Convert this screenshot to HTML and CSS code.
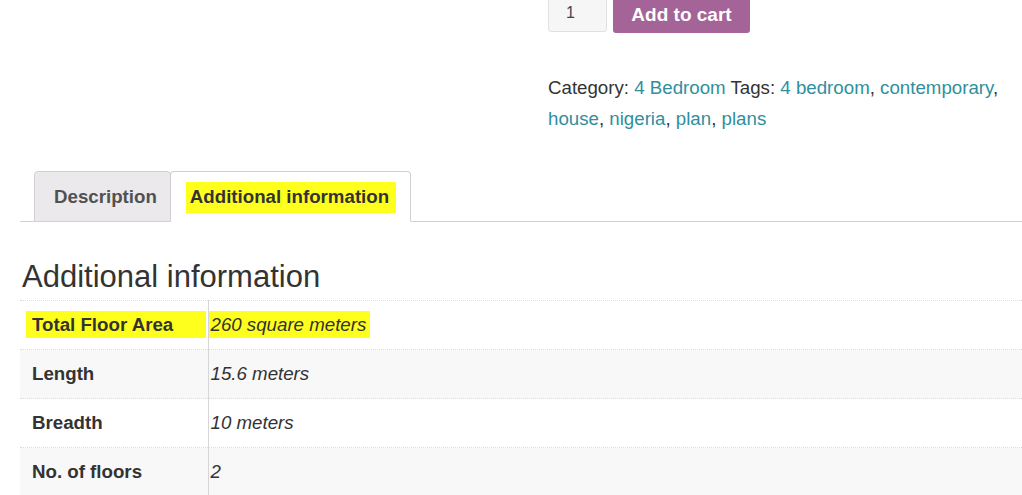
FILE: index.html
```html
<!DOCTYPE html>
<html>
<head>
<meta charset="utf-8">
<link rel="stylesheet" href="styles.css">
</head>
<body>
<div class="page">
  <div class="top">
    <div class="gallery"></div>
    <div class="summary">
      <form class="cart">
        <div class="qty">1</div>
        <button type="button" class="btn">Add to cart</button>
      </form>
      <div class="meta">
        Category: <a href="#">4 Bedroom</a> Tags: <a href="#">4 bedroom</a>, <a href="#">contemporary</a>, <a href="#">house</a>, <a href="#">nigeria</a>, <a href="#">plan</a>, <a href="#">plans</a>
      </div>
    </div>
  </div>
  <div class="tabs-wrap">
    <ul class="tabs">
      <li class="tab">Description</li>
      <li class="tab active"><span class="hl hl-tab">Additional information</span></li>
    </ul>
    <h2 class="title">Additional information</h2>
    <table class="attrs">
      <tr>
        <th><span class="hl hl-th">Total Floor Area</span></th>
        <td><span class="hl hl-td">260 square meters</span></td>
      </tr>
      <tr class="alt">
        <th>Length</th>
        <td>15.6 meters</td>
      </tr>
      <tr>
        <th>Breadth</th>
        <td>10 meters</td>
      </tr>
      <tr class="alt">
        <th>No. of floors</th>
        <td>2</td>
      </tr>
    </table>
  </div>
</div>
</body>
</html>
```
FILE: styles.css
```css
html, body {
  margin: 0;
  padding: 0;
  background: #fff;
  overflow: hidden;
}
body {
  font-family: "Liberation Sans", Arial, sans-serif;
  color: #333;
  font-size: 18.7px;
}
.page {
  width: 1022px;
  height: 495px;
  overflow: hidden;
}
.top {
  display: flex;
}
.gallery {
  width: 548px;
  flex: none;
}
.summary {
  flex: 1;
  padding-right: 10px;
}
.cart {
  display: flex;
  gap: 6px;
  margin: -10px 0 0 0;
}
.qty {
  height: 42px;
  box-sizing: border-box;
  width: 59px;
  background: #f7f6f7;
  border: 1px solid #e2e0e2;
  border-radius: 3px;
  padding: 13px 0 0 17px;
  font-size: 16px;
  color: #43454b;
  line-height: 18px;
}
.btn {
  height: 43px;
  padding: 6px 0 0;
  border: 0;
  border-radius: 3px;
  background: #a46497;
  color: #fff;
  font-family: "Liberation Sans", Arial, sans-serif;
  font-weight: bold;
  font-size: 19px;
  line-height: 26px;
  width: 137px;
  text-align: center;
}
.meta {
  margin-top: 39px;
  line-height: 31px;
  font-size: 18.7px;
  color: #333;
}
.meta a {
  color: #2f8f9d;
  text-decoration: none;
}
.tabs-wrap {
  margin: 37px 0 0 20px;
}
.tabs {
  list-style: none;
  margin: 0;
  padding: 0 0 0 14px;
  display: flex;
  border-bottom: 1px solid #d3ced2;
  height: 50px;
}
.tab {
  height: 51px;
  box-sizing: border-box;
  border: 1px solid #d3ced2;
  border-radius: 4px 4px 0 0;
  background: #ebe9eb;
  color: #515151;
  font-weight: bold;
  font-size: 18.7px;
  padding: 14px 13px 0 19px;
  line-height: 22px;
}
.tab.active {
  background: #fff;
  border-bottom-color: #fff;
  color: #333;
  margin-left: -1px;
  padding: 14px 14px 0 19px;
  position: relative;
  z-index: 1;
}
.hl {
  background: #ffff1e;
}
.hl-tab {
  padding: 4px 7px 6px 4px;
  margin-left: -4px;
}
.title {
  font-weight: normal;
  font-size: 31px;
  margin: 38px 0 0 2px;
  line-height: 34px;
  color: #333;
}
.attrs {
  margin-top: 6px;
  width: 1002px;
  border-collapse: collapse;
  border-spacing: 0;
}
.attrs th,
.attrs td {
  height: 49px;
  box-sizing: border-box;
  border-top: 1px dotted #dcdcdc;
  padding: 0;
  vertical-align: middle;
  font-size: 18.7px;
  line-height: 22px;
  white-space: nowrap;
}
.attrs th {
  width: 188px;
  text-align: left;
  font-weight: bold;
  padding-left: 12px;
  border-right: 1px solid #d6d6d6;
  color: #333;
}
.attrs td {
  font-style: italic;
  padding-left: 2px;
  color: #333;
}
.attrs tr.alt th,
.attrs tr.alt td {
  background: #f8f8f8;
}
.hl-th {
  padding: 3px 33px 3px 6px;
  margin-left: -6px;
}
.hl-td {
  padding: 3px 4px 3px 2px;
  margin-left: -2px;
}
```
